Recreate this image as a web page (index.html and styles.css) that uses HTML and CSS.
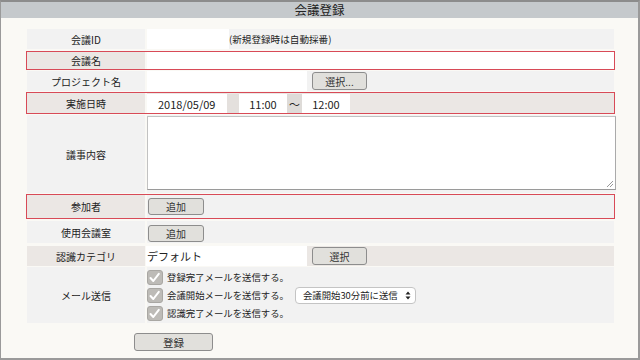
FILE: index.html
```html
<!DOCTYPE html>
<html lang="ja">
<head>
<meta charset="utf-8">
<link rel="stylesheet" href="styles.css">
</head>
<body>
<div class="frame">
  <div class="titlebar">会議登録</div>
  <div class="form">
    <div class="row r1">
      <div class="label">会議ID</div>
      <div class="value"><span class="input w82"></span><span class="note">(新規登録時は自動採番)</span></div>
    </div>
    <div class="row r2 hl">
      <div class="label pink">会議名</div>
      <div class="value"><span class="input full"></span></div>
    </div>
    <div class="row r3">
      <div class="label">プロジェクト名</div>
      <div class="value"><span class="input w160"></span><span class="btn bsel">選択...</span></div>
    </div>
    <div class="row r4 hl">
      <div class="label pink">実施日時</div>
      <div class="value pink dt">
        <span class="input date">2018/05/09</span>
        <span class="gapcell"></span>
        <span class="input time t1">11:00</span>
        <span class="tilde">〜</span>
        <span class="input time t2">12:00</span>
      </div>
    </div>
    <div class="row r5">
      <div class="label">議事内容</div>
      <div class="value top">
        <span class="textarea">
          <svg class="grip" width="8" height="8" viewBox="0 0 8 8"><path d="M7 1 L1 7 M7 4 L4 7" stroke="#999" stroke-width="1" fill="none"/></svg>
        </span>
      </div>
    </div>
    <div class="row r6 hl">
      <div class="label pink">参加者</div>
      <div class="value"><span class="btn badd">追加</span></div>
    </div>
    <div class="row r7">
      <div class="label">使用会議室</div>
      <div class="value"><span class="btn badd">追加</span></div>
    </div>
    <div class="row r8">
      <div class="label pink">認識カテゴリ</div>
      <div class="value pink"><span class="input w160 cat">デフォルト</span><span class="btn bsel">選択</span></div>
    </div>
    <div class="row r9">
      <div class="label">メール送信</div>
      <div class="value mail">
        <div class="chk"><span class="box"><svg width="15" height="15" viewBox="0 0 15 15"><path d="M3.5 8 L6.3 11 L11.8 3.8" stroke="#fff" stroke-width="2" fill="none" stroke-linecap="round" stroke-linejoin="round"/></svg></span><span>登録完了メールを送信する。</span></div>
        <div class="chk"><span class="box"><svg width="15" height="15" viewBox="0 0 15 15"><path d="M3.5 8 L6.3 11 L11.8 3.8" stroke="#fff" stroke-width="2" fill="none" stroke-linecap="round" stroke-linejoin="round"/></svg></span><span>会議開始メールを送信する。</span><span class="select"><span>会議開始30分前に送信</span><svg class="arr" width="6" height="9" viewBox="0 0 6 9"><path d="M0.5 3.5 L3 0.5 L5.5 3.5 Z M0.5 5.5 L3 8.5 L5.5 5.5 Z" fill="#222"/></svg></span></div>
        <div class="chk"><span class="box"><svg width="15" height="15" viewBox="0 0 15 15"><path d="M3.5 8 L6.3 11 L11.8 3.8" stroke="#fff" stroke-width="2" fill="none" stroke-linecap="round" stroke-linejoin="round"/></svg></span><span>認識完了メールを送信する。</span></div>
      </div>
    </div>
  </div>
  <div class="submit"><span class="btn bsub">登録</span></div>
</div>
</body>
</html>
```

FILE: styles.css
```css
* { box-sizing: border-box; }
html, body { margin: 0; padding: 0; }
body {
  width: 640px;
  height: 360px;
  font-family: "Noto Sans CJK JP", "Liberation Sans", sans-serif;
  font-size: 10px;
  color: #222;
  background: #faf9f5;
}
.frame {
  width: 640px;
  height: 360px;
  border: 1px solid #9a9a9a;
  border-top: 2px solid #8c8c8c;
  border-right-width: 2px;
  border-bottom-width: 2px;
  background: #faf9f5;
}
.titlebar {
  height: 16px;
  background: #c5c9cc;
  text-align: center;
  font-size: 12.5px;
  line-height: 16px;
  color: #222;
}
.form {
  margin: 11px 0 0 25px;
  width: 589px;
  display: flex;
  flex-direction: column;
}
.row {
  display: flex;
  gap: 2px;
  border-left: 1px solid transparent;
  border-right: 1px solid transparent;
}
.row.hl { border: 1px solid #d84a57; }
.label {
  width: 118px;
  flex: none;
  background: #f2f2f2;
  display: flex;
  align-items: center;
  justify-content: center;
  font-size: 10px;
}
.value {
  flex: 1;
  background: #f2f2f2;
  display: flex;
  align-items: stretch;
}
.pink { background: #ebe7e4; }
.r1 { height: 20px; }
.r2 { height: 19px; margin-top: 2px; }
.r3 { height: 20px; margin-top: 1px; }
.r4 { height: 22px; margin-top: 1px; }
.r5 { height: 78px; margin-top: 1px; }
.r6 { height: 25px; margin-top: 1px; }
.r7 { height: 22px; margin-top: 2px; }
.r8 { height: 20px; margin-top: 3px; }
.r9 { height: 56px; margin-top: 1px; }
.input {
  background: #fff;
  display: inline-flex;
  align-items: center;
  font-size: 11px;
}
.w82 { width: 82px; }
.w160 { width: 160px; }
.full { width: 100%; }
.note { font-size: 9.6px; margin-left: 0; align-self: center; white-space: nowrap; }
.btn {
  display: inline-flex;
  align-items: center;
  justify-content: center;
  background: #e1e0dc;
  border: 1px solid #8d8d8d;
  border-radius: 3px;
  font-size: 10px;
  color: #333;
  height: 17px;
  align-self: center;
}
.bsel { width: 55px; margin-left: 5px; height: 18px; }
.badd { width: 56px; margin-left: 1px; }
.r7 .badd { align-self: flex-start; margin-top: 4px; }
.dt { padding: 1px 0 0 0; }
.date { width: 80px; padding-left: 11px; }
.gapcell { width: 12px; background: #e4e0dd; }
.t1 { width: 48px; justify-content: center; }
.tilde { width: 15px; font-size: 11px; background: #dedbd8; display: flex; align-items: center; justify-content: center; }
.t2 { width: 48px; justify-content: center; }
.top { align-items: flex-start; }
.textarea {
  position: relative;
  width: 469px;
  height: 74px;
  margin-top: 1px;
  background: #fff;
  border: 1px solid #c2c2c2;
  border-bottom-color: #9a9a9a;
  border-right-color: #aaa;
}
.grip { position: absolute; right: 1px; bottom: 1px; }
.cat { padding-left: 1px; font-size: 11px; margin-left: -1px; width: 161px; }
.mail {
  flex-direction: column;
  align-items: flex-start;
  justify-content: center;
  gap: 2px;
}
.chk { display: flex; align-items: center; height: 16px; font-size: 9.4px; white-space: nowrap; }
.box {
  width: 16px;
  height: 15px;
  background: #bdbbb7;
  border: 1px solid #a9a7a3;
  border-radius: 3px;
  margin-right: 4px;
  display: inline-flex;
}
.box svg { margin: -1px 0 0 -1px; }
.select {
  display: inline-flex;
  align-items: center;
  justify-content: space-between;
  margin-left: 6px;
  height: 17px;
  width: 121px;
  padding: 0 4px 0 7px;
  background: #fff;
  border: 1px solid #c4c4c4;
  border-radius: 4px;
  font-size: 9.4px;
  white-space: nowrap;
}
.submit { margin: 10px 0 0 133px; }
.bsub { width: 79px; height: 18px; font-size: 10.5px; }
```
